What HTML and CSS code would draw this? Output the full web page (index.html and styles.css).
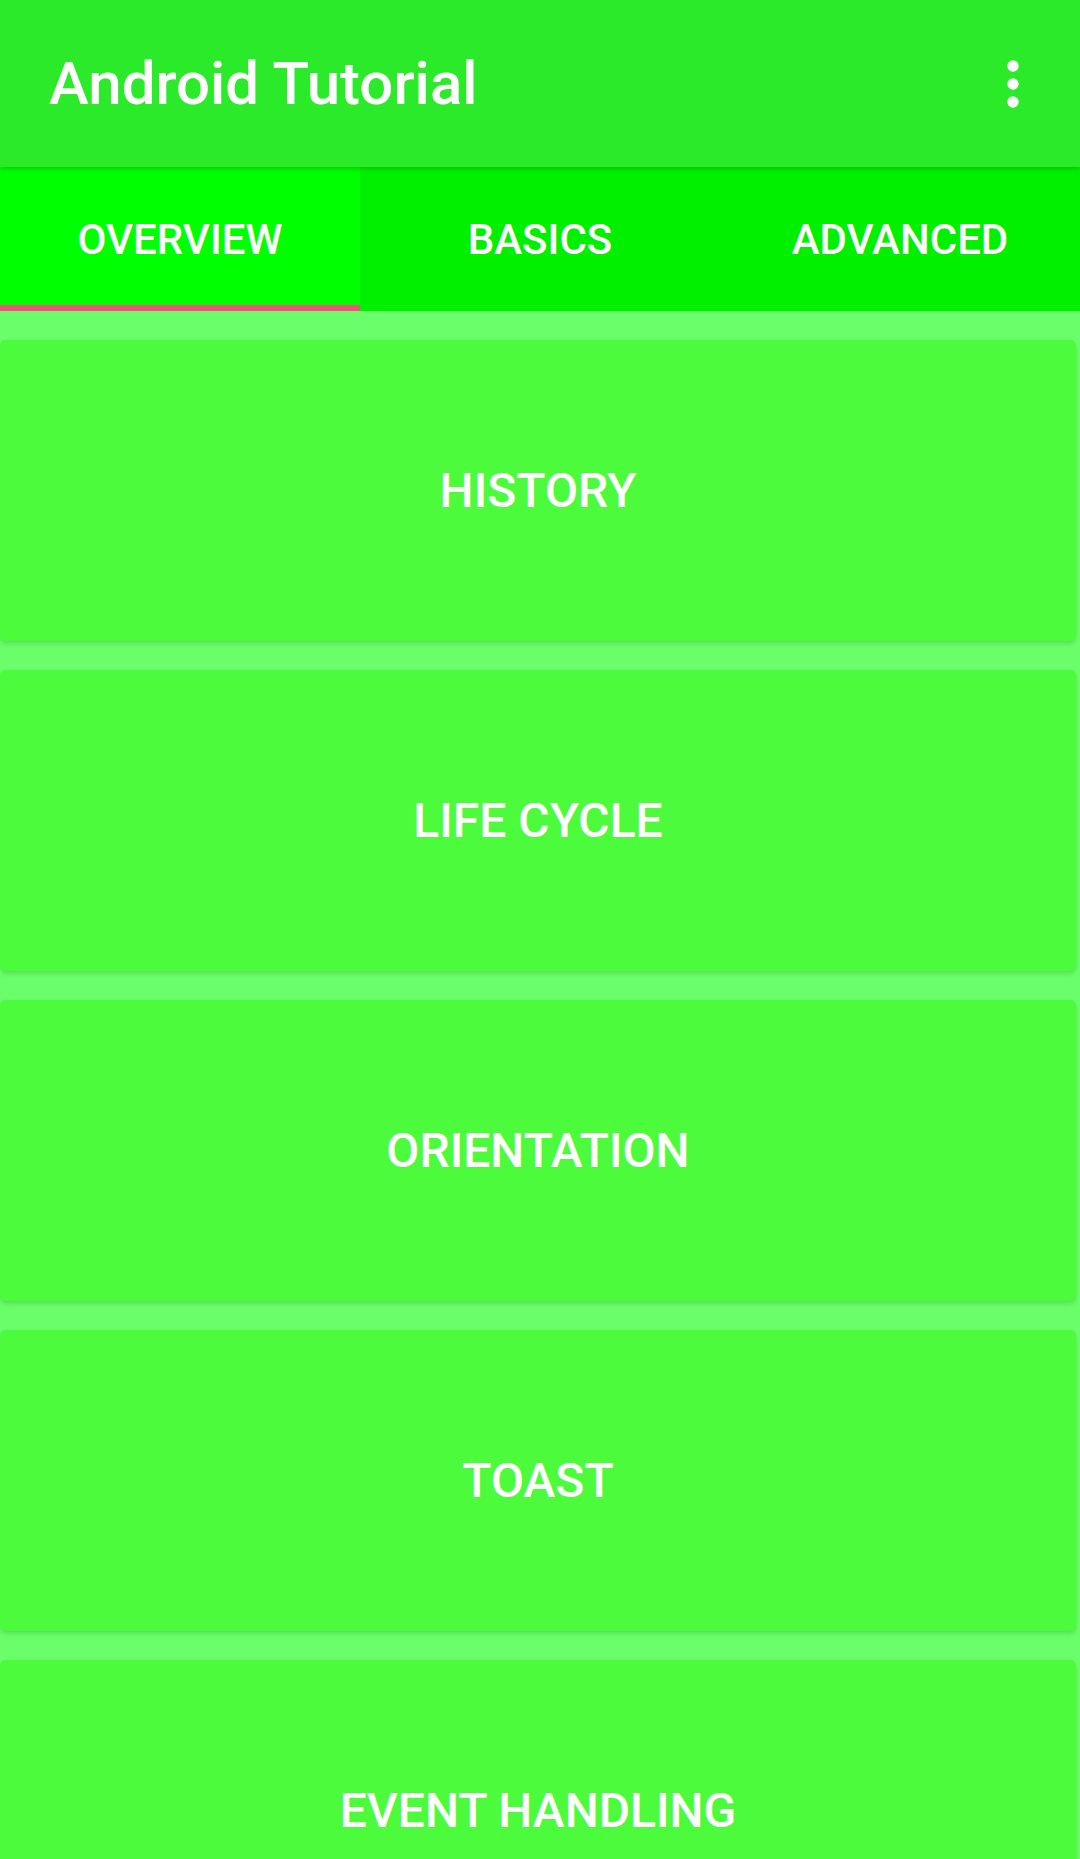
FILE: index.html
```html
<!DOCTYPE html>
<html lang="en">
<head>
<meta charset="utf-8">
<title>Android Tutorial</title>
<link rel="stylesheet" href="styles.css">
</head>
<body>
<div class="app">
  <header class="toolbar">
    <h1 class="title">Android Tutorial</h1>
    <button class="menu" aria-label="More options">
      <svg width="12" height="48" viewBox="0 0 12 48"><circle cx="6" cy="6" r="5.7" fill="#fff"/><circle cx="6" cy="24" r="5.7" fill="#fff"/><circle cx="6" cy="42" r="5.7" fill="#fff"/></svg>
    </button>
  </header>
  <nav class="tabs">
    <div class="tab active">OVERVIEW</div>
    <div class="tab">BASICS</div>
    <div class="tab">ADVANCED</div>
  </nav>
  <main class="list">
    <div class="card">HISTORY</div>
    <div class="card">LIFE CYCLE</div>
    <div class="card">ORIENTATION</div>
    <div class="card">TOAST</div>
    <div class="card">EVENT HANDLING</div>
  </main>
</div>
</body>
</html>
```
FILE: styles.css
```css
html, body {
  margin: 0;
  padding: 0;
}
body {
  width: 1080px;
  height: 1859px;
  overflow: hidden;
  background: #6aff6a;
  font-family: Roboto, "Liberation Sans", sans-serif;
  color: #fff;
}
.app {
  display: flex;
  flex-direction: column;
  height: 1859px;
  overflow: hidden;
}
.toolbar {
  flex: 0 0 167px;
  position: relative;
  z-index: 2;
  background: #2aea2a;
  display: flex;
  align-items: center;
  justify-content: space-between;
  padding: 0 61px 0 49px;
  box-shadow: 0 2px 5px rgba(0, 0, 0, 0.18);
  box-sizing: border-box;
}
.title {
  margin: 0;
  font-size: 60px;
  font-weight: 500;
  line-height: 1;
}
.menu {
  background: none;
  border: 0;
  padding: 0;
  display: flex;
  align-items: center;
  height: 48px;
}
.menu svg {
  display: block;
}
.tabs {
  flex: 0 0 144px;
  display: grid;
  grid-template-columns: repeat(3, 1fr);
  background: #00f000;
  position: relative;
  z-index: 1;
}
.tab {
  display: flex;
  align-items: center;
  justify-content: center;
  font-size: 42px;
  font-weight: 500;
  box-sizing: border-box;
}
.tab.active {
  background: #00ff00;
  border-bottom: 6px solid #f0507a;
  padding-top: 6px;
}
.list {
  flex: 1 1 auto;
  min-height: 0;
  overflow: hidden;
  display: flex;
  flex-direction: column;
  gap: 29px;
  padding: 29px 4px 0 0;
}
.card {
  flex: 0 0 301px;
  background: #4cfc3c;
  border-radius: 6px;
  box-shadow: 0 3px 5px rgba(0, 0, 0, 0.13), 0 0 2px rgba(0, 0, 0, 0.06);
  display: flex;
  align-items: center;
  justify-content: center;
  font-size: 48px;
  font-weight: 500;
}
```
